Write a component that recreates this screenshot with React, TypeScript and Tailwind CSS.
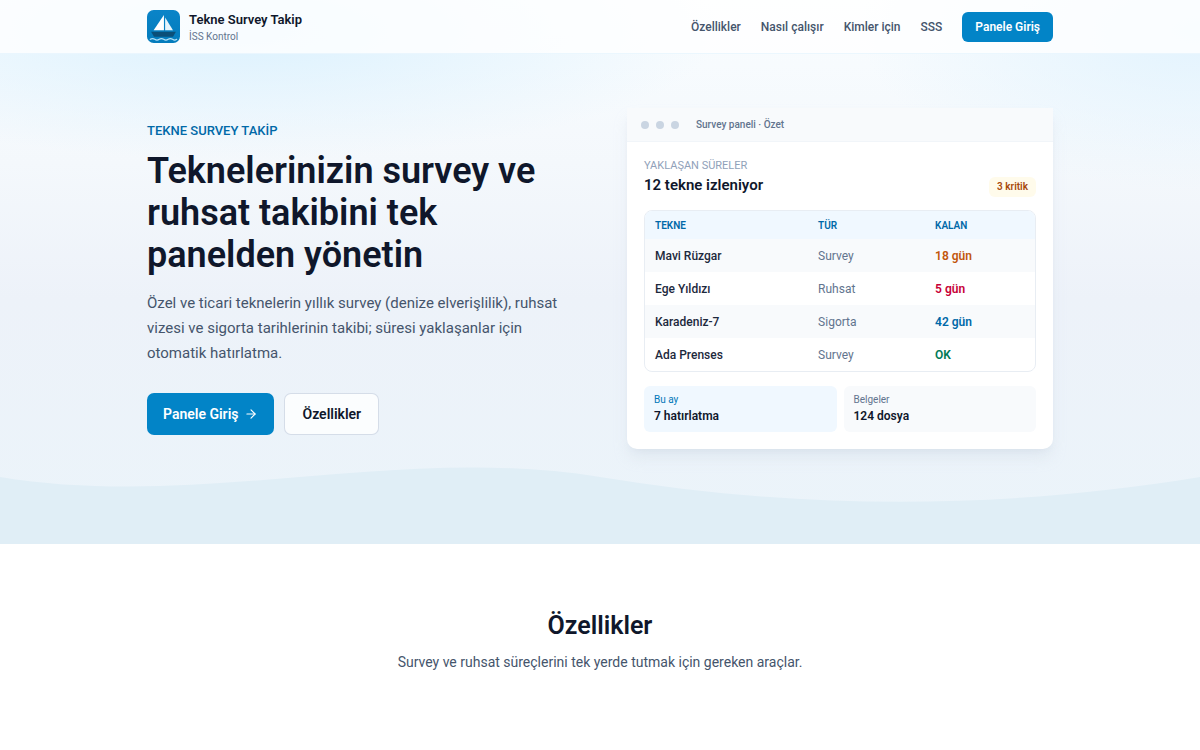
import { ArrowRight } from 'lucide-react';

const navLinks = [
    { label: 'Özellikler', href: '#ozellikler' },
    { label: 'Nasıl çalışır', href: '#nasil-calisir' },
    { label: 'Kimler için', href: '#kimler-icin' },
    { label: 'SSS', href: '#sss' },
];

const boats = [
    { name: 'Mavi Rüzgar', type: 'Survey', left: '18 gün', color: 'text-[#c2560c]' },
    { name: 'Ege Yıldızı', type: 'Ruhsat', left: '5 gün', color: 'text-[#c70036]' },
    { name: 'Karadeniz-7', type: 'Sigorta', left: '42 gün', color: 'text-[#0069a8]' },
    { name: 'Ada Prenses', type: 'Survey', left: 'OK', color: 'text-[#007a55]' },
];

function Logo() {
    return (
        <svg viewBox="0 0 40 40" className="size-[33px]" aria-hidden="true">
            <defs>
                <linearGradient id="sea" x1="0" y1="0" x2="0" y2="1">
                    <stop offset="0" stopColor="#0a84c8" />
                    <stop offset="1" stopColor="#047cbc" />
                </linearGradient>
            </defs>
            <rect width="40" height="40" rx="8" fill="url(#sea)" />
            <path d="M20.500 6v18.500H8z" fill="#fff" />
            <path d="M22 9v15.500h9.500z" fill="#e6f4fc" />
            <path d="M5 26.500h30l-3.500 6H8.500z" fill="#0b4f78" />
            <path
                d="M4 35.500q2.700-1.800 5.400 0t5.400 0 5.400 0 5.400 0 5.400 0 5 0"
                fill="none"
                stroke="#b5e2f8"
                strokeWidth="1.500"
                strokeLinecap="round"
            />
        </svg>
    );
}

function Header() {
    return (
        <header className="border-b border-sky-100/60 bg-white/80">
            <div className="mx-auto flex h-[53px] max-w-[946px] items-center justify-between px-5">
                <a href="#" className="flex items-center gap-[9px]">
                    <Logo />
                    <span className="flex flex-col">
                        <span className="text-[13px] leading-[20px] font-semibold text-slate-900">Tekne Survey Takip</span>
                        <span className="text-[10px] leading-[14px] text-slate-500">İSS Kontrol</span>
                    </span>
                </a>
                <nav className="flex items-center gap-5 text-[12px] font-medium text-slate-600">
                    {navLinks.map((link) => (
                        <a key={link.href} href={link.href} className="hover:text-sky-700">
                            {link.label}
                        </a>
                    ))}
                    <a
                        href="#giris"
                        className="flex h-[30px] items-center rounded-md bg-[#0284c7] px-[13px] font-semibold text-white"
                    >
                        Panele Giriş
                    </a>
                </nav>
            </div>
        </header>
    );
}

function PanelPreview() {
    return (
        <div className="overflow-hidden rounded-b-[10px] bg-white shadow-lg shadow-slate-300/40">
            <div className="flex h-[34px] items-center gap-[7px] border-b border-slate-100 bg-slate-50 px-[14px]">
                <span className="size-2 rounded-full bg-slate-300" />
                <span className="size-2 rounded-full bg-slate-300" />
                <span className="size-2 rounded-full bg-slate-300" />
                <span className="ml-[10px] text-[10px] font-medium text-slate-500">Survey paneli · Özet</span>
            </div>
            <div className="p-[17px]">
                <div className="flex items-end justify-between">
                    <div>
                        <p className="text-[11px] leading-[14px] text-slate-400">YAKLAŞAN SÜRELER</p>
                        <p className="text-[15px] leading-6 font-semibold text-slate-900">12 tekne izleniyor</p>
                    </div>
                    <span className="rounded-md bg-amber-50 px-2 text-[10px] leading-[20px] font-semibold text-[#a84a0b]">
                        3 kritik
                    </span>
                </div>
                <div className="mt-[13px] overflow-hidden rounded-[8px] border border-slate-200/80">
                    <table className="w-full table-fixed text-left text-[12px]">
                        <thead className="bg-[#f0f8ff] text-[10px] text-[#0069a8]">
                            <tr className="h-7">
                                <th className="w-[39%] px-[10px] font-semibold">TEKNE</th>
                                <th className="w-[30%] px-[21px] font-semibold">TÜR</th>
                                <th className="px-[21px] font-semibold">KALAN</th>
                            </tr>
                        </thead>
                        <tbody>
                            {boats.map((boat) => (
                                <tr key={boat.name} className="h-[33px] odd:bg-slate-50">
                                    <td className="px-[10px] font-medium text-slate-800">{boat.name}</td>
                                    <td className="px-[21px] text-slate-500">{boat.type}</td>
                                    <td className={`px-[21px] font-semibold ${boat.color}`}>{boat.left}</td>
                                </tr>
                            ))}
                        </tbody>
                    </table>
                </div>
                <div className="mt-[14px] grid grid-cols-2 gap-[7px]">
                    <div className="rounded-md bg-[#f0f8ff] px-[10px] py-[7px]">
                        <p className="text-[10px] leading-[14px] text-[#0077b8]">Bu ay</p>
                        <p className="text-[12px] leading-[18px] font-semibold text-slate-900">7 hatırlatma</p>
                    </div>
                    <div className="rounded-md bg-slate-50 px-[10px] py-[7px]">
                        <p className="text-[10px] leading-[14px] text-slate-500">Belgeler</p>
                        <p className="text-[12px] leading-[18px] font-semibold text-slate-900">124 dosya</p>
                    </div>
                </div>
            </div>
        </div>
    );
}

function Hero() {
    return (
        <section className="relative">
            <svg
                viewBox="0 0 1200 80"
                preserveAspectRatio="none"
                className="absolute bottom-0 left-0 h-20 w-full"
                aria-hidden="true"
            >
                <path d="M0 13C200 46 400 -20 600 13S1000 46 1200 13V80H0z" fill="#e0eef6" />
            </svg>
            <div className="relative mx-auto grid max-w-[946px] grid-cols-2 items-center gap-[54px] px-5 pt-[54px] pb-[95px]">
                <div>
                    <p className="text-[13px] leading-[18px] font-medium text-[#0069a8]">TEKNE SURVEY TAKİP</p>
                    <h1 className="mt-[10px] text-[36px] leading-[42px] font-semibold text-slate-900">
                        Teknelerinizin survey ve ruhsat takibini tek panelden yönetin
                    </h1>
                    <p className="mt-[15px] text-[15px] leading-[25px] text-slate-600">
                        Özel ve ticari teknelerin yıllık survey (denize elverişlilik), ruhsat vizesi ve sigorta tarihlerinin
                        takibi; süresi yaklaşanlar için otomatik hatırlatma.
                    </p>
                    <div className="mt-[27px] flex gap-[10px] text-[14px] font-semibold">
                        <a href="#giris" className="flex h-[42px] items-center gap-[6px] rounded-[7px] bg-[#0284c7] px-4 text-white">
                            Panele Giriş
                            <ArrowRight className="size-[14px]" />
                        </a>
                        <a
                            href="#ozellikler"
                            className="flex h-[42px] items-center rounded-[7px] border border-slate-300/80 bg-white/80 px-[17px] text-slate-900"
                        >
                            Özellikler
                        </a>
                    </div>
                </div>
                <PanelPreview />
            </div>
        </section>
    );
}

export default function App() {
    return (
        <div className="min-h-screen bg-white font-['Roboto',sans-serif]">
            <div className="bg-[radial-gradient(ellipse_480px_130px_at_20%_30px,#dbf1fe,transparent),radial-gradient(ellipse_340px_160px_at_100%_30px,#e2f3fe,transparent),linear-gradient(#f9fdff,#f4f8fc_30%,#edf2f9_55%,#ebf4fa)]">
                <Header />
                <Hero />
            </div>
            <section id="ozellikler" className="px-5 pt-16 pb-20 text-center">
                <h2 className="text-[25px] leading-[36px] font-semibold text-slate-900">Özellikler</h2>
                <p className="mt-2 text-[14px] leading-[20px] text-slate-600">
                    Survey ve ruhsat süreçlerini tek yerde tutmak için gereken araçlar.
                </p>
            </section>
        </div>
    );
}
